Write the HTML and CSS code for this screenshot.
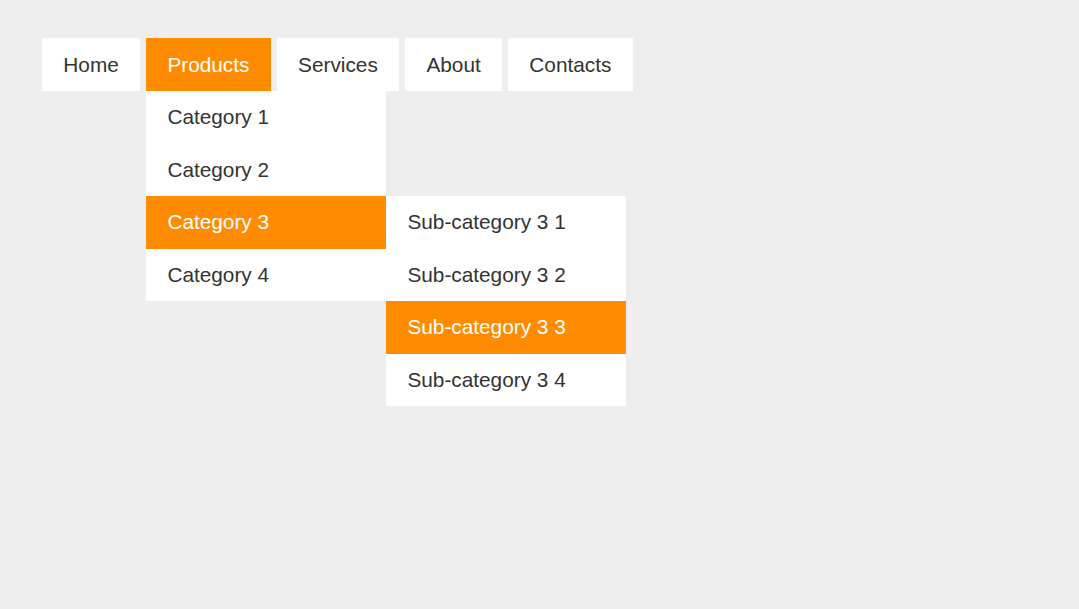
FILE: index.html
```html
<!DOCTYPE html>
<html lang="en">
<head>
<meta charset="utf-8">
<title>Menu</title>
<link rel="stylesheet" href="styles.css">
</head>
<body>
<nav class="nav">
  <ul class="menu">
    <li class="item"><a class="link">Home</a></li>
    <li class="item active"><a class="link">Products</a>
      <ul class="dropdown">
        <li class="sub"><a class="sublink">Category 1</a></li>
        <li class="sub"><a class="sublink">Category 2</a></li>
        <li class="sub active"><a class="sublink">Category 3</a>
          <ul class="dropdown side">
            <li class="sub"><a class="sublink">Sub-category 3 1</a></li>
            <li class="sub"><a class="sublink">Sub-category 3 2</a></li>
            <li class="sub active"><a class="sublink">Sub-category 3 3</a></li>
            <li class="sub"><a class="sublink">Sub-category 3 4</a></li>
          </ul>
        </li>
        <li class="sub"><a class="sublink">Category 4</a></li>
      </ul>
    </li>
    <li class="item"><a class="link">Services</a></li>
    <li class="item"><a class="link">About</a></li>
    <li class="item"><a class="link">Contacts</a></li>
  </ul>
</nav>
</body>
</html>
```
FILE: styles.css
```css
html, body {
  margin: 0;
  padding: 0;
  background: #eeeeee;
  height: 100%;
}
body {
  padding: 38px 0 0 42px;
  box-sizing: border-box;
  font-family: "Liberation Sans", Arial, sans-serif;
  font-size: 20.8px;
  color: #333333;
}
.menu {
  list-style: none;
  margin: 0;
  padding: 0;
  display: flex;
  gap: 6px;
}
.item {
  position: relative;
  background: #ffffff;
}
.link {
  display: block;
  height: 53px;
  box-sizing: border-box;
  padding: 0 21.3px;
  line-height: 53px;
  color: #333333;
  cursor: pointer;
}
.item.active {
  background: #ff8c00;
}
.item.active > .link {
  color: #ffffff;
}
.dropdown {
  position: absolute;
  top: 53px;
  left: 0;
  width: 240px;
  list-style: none;
  margin: 0;
  padding: 0;
  background: #ffffff;
  z-index: 2;
}
.dropdown.side {
  top: 0;
  left: 240px;
}
.sub {
  position: relative;
  background: #ffffff;
}
.sublink {
  display: block;
  height: 52.5px;
  line-height: 52.5px;
  padding: 0 21.3px;
  color: #333333;
  white-space: nowrap;
  cursor: pointer;
}
.sub.active {
  background: #ff8c00;
}
.sub.active > .sublink {
  color: #ffffff;
}
```
